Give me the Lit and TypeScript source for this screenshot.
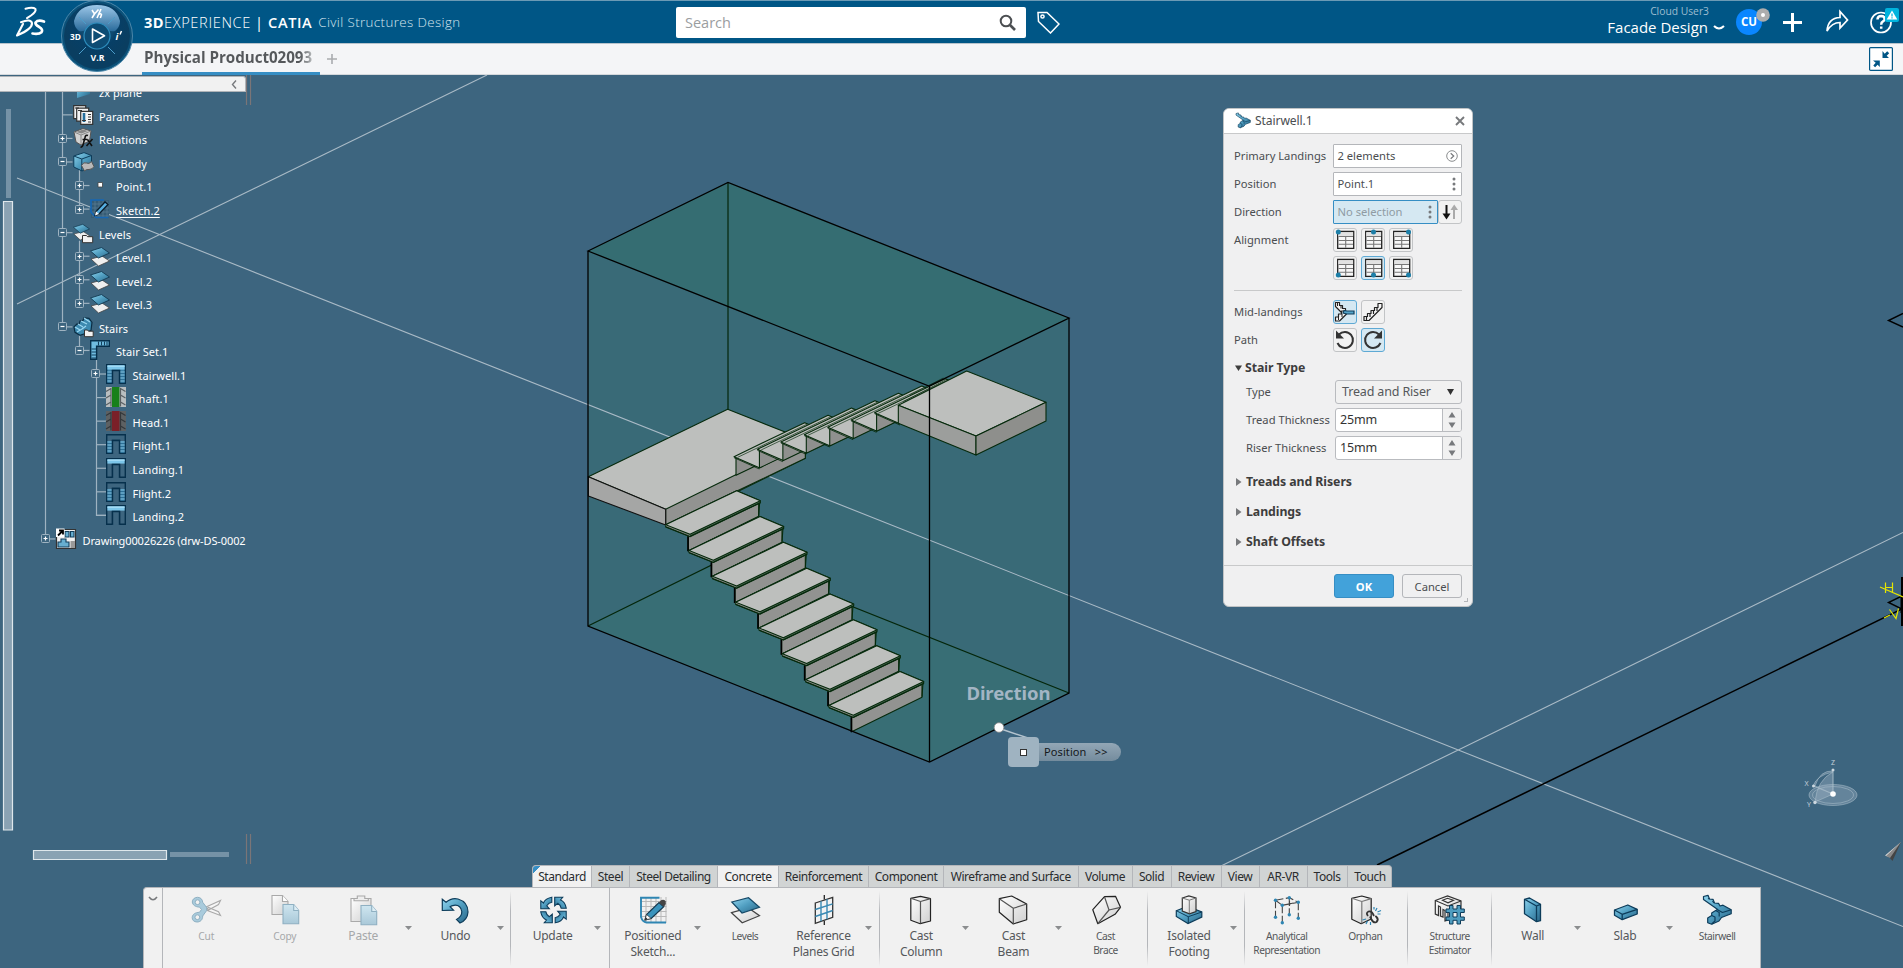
import { LitElement, html, svg, css, nothing } from "lit";
import { customElement, property } from "lit/decorators.js";
import { classMap } from "lit/directives/class-map.js";

const G = svg`<defs>
  <linearGradient id="b" x1="0" y1="0" x2="1" y2="1"><stop offset="0" stop-color="#8fd4ee"/><stop offset=".5" stop-color="#4f9dc0"/><stop offset="1" stop-color="#2b6788"/></linearGradient>
  <linearGradient id="w" x1="0" y1="0" x2="1" y2="1"><stop offset="0" stop-color="#ffffff"/><stop offset="1" stop-color="#cfcfcf"/></linearGradient>
  <linearGradient id="p" x1="0" y1="0" x2="0" y2="1"><stop offset="0" stop-color="#cfe6f0"/><stop offset="1" stop-color="#a9c8d8"/></linearGradient>
</defs>`;

/* Toolbar glyphs, drawn on a 32 x 30 grid */
const ICONS: Record<string, unknown> = {
  cut: svg`<g fill="none" stroke="#a9a9a9" stroke-width="1.1"><path fill="#f6f6f6" d="M15.5 12 30 5.500 28 9.500 18 15zM15.500 15 30 20.500 28 16.800 18 12.500z"/></g><g fill="#a9cbdc" stroke="#8fb0c2" stroke-width="1"><path fill-rule="evenodd" d="M7 2.300c3 0 5 2 5.200 5l4 5.200v3l-4 5.500c0 4-2.500 6-5.700 6-3 0-5-2-4.800-4.600C2 19 5 17.500 9 17.300l2-2.800-2-2.400C5 12 2 10 1.800 7 1.700 4.500 4 2.300 7 2.300zM7 4.800a2.400 2.400 0 1 0 .1 4.800A2.400 2.400 0 0 0 7 4.800zM6.800 19.800a2.400 2.400 0 1 0 .1 4.800 2.400 2.400 0 0 0-.1-4.800z"/></g>`,
  copy: svg`<g stroke-width="1.100"><path d="M2.500.5h10.500l5.500 6v13H2.500z" fill="url(#w)" stroke="#a9a9a9"/><path d="M13 .5v6h5.500" fill="#fff" stroke="#a9a9a9"/><path d="M13.500 9.500h10.700l5 6v13.300H13.500z" fill="url(#p)" stroke="#8fb0c2"/><path d="M24.200 9.500v6h5" fill="#ddeef5" stroke="#8fb0c2"/></g>`,
  paste: svg`<g stroke-width="1.100"><path d="M3.500 3.500h20v23h-20z" fill="url(#w)" stroke="#a9a9a9"/><path d="M6.500 5.800V3.500h3.300V1h7.500v2.500h3.500v2.300z" fill="#eee" stroke="#a9a9a9"/><path d="M13.500 10.500h10.700l5 6v13.300H13.500z" fill="url(#p)" stroke="#8fb0c2"/><path d="M24.200 10.500v6h5" fill="#ddeef5" stroke="#8fb0c2"/></g>`,
  undo: svg`<path d="M2.800 4.200 6.500 7.300Q12 2.500 18.500 4 28.500 7 28.500 17 28 25 20.500 28L17 24.500Q22.500 21.500 22.300 16.500 21 9.500 14.500 10.300 11.800 10.600 10.600 11.700L14 15.200 2.800 15.500z" fill="url(#b)" stroke="#0d3c5a" stroke-width="1.200"/>`,
  update: svg`<g fill="url(#b)" stroke="#0d3c5a" stroke-width="1.100">${[0, 90, 180, 270].map(a => svg`<path transform="rotate(${a} 16 15)" d="M14.300 2.200Q7.500 3.500 6 8L3.300 5.800v8h8.500L9.300 10.800Q11 7.800 14.300 7.300z"/>`)}</g>`,
  sketch: svg`<path d="M3 6.500h26M3 11.500h26M3 16.500h26M3 21.500h26M8.500 2v26M13.500 2v26M18.500 2v26M23.500 2v26M28.500 2v26" stroke="#b9b9b9" fill="none"/><path d="M22 2.700H3.500V22q1.500 5 5.500 5.500h19.500" fill="none" stroke="#2f86b3" stroke-width="1.900"/><path d="M7.500 25 9 19.500 21.500 7.500l4.700 4.300L13.700 23.500z" fill="#3b94bd" stroke="#17394f" stroke-width="1.200"/><path d="M7.500 25 9 19.500l4.700 4z" fill="#fff" stroke="#333" stroke-width=".7"/><path d="m21.500 7.500 2-2.300q3-1.200 4.500 1 .8 2-.2 3.800l-1.600 1.800z" fill="#444"/><path d="m7.500 25 .7-2.700 1.800 1.700z" fill="#222"/>`,
  levels: svg`<path d="M2 17.700 19 13l11 7.700L12.700 27.700z" fill="url(#w)" stroke="#444" stroke-width="1.200"/><path d="M2.300 7 19 2.700l11 9.600L12.500 18z" fill="url(#b)" stroke="#174a68" stroke-width="1.200"/>`,
  grid: svg`<path d="M6.800 8 24.200 2.300v20L6.800 28.300z" fill="#f3f3f3" stroke="#333" stroke-width="1.300"/><path d="M6.800 14.500 24.200 8.800M6.800 21.500l17.400-6M12.500 6.300v20M18.500 4.300v20" stroke="#3a8ab4" stroke-width="1.400"/><path d="M15.800 0v4.500M15.800 26v4" stroke="#222" stroke-width="1.300"/>`,
  column: svg`<g stroke="#222" stroke-width="1.200" stroke-linejoin="round"><path d="m5.300 3.300 9.700-2 10 2.400V26l-10.300 2.700-9.400-3.400z" fill="url(#w)"/><path d="m5.300 3.300 9.700 3.200 10-2.800M15 6.500v22" fill="none" stroke="#555"/></g>`,
  beam: svg`<g stroke="#222" stroke-width="1.200" stroke-linejoin="round"><path d="M1.800 3.700 14.200 1l15 8v15.700L15.800 29l-14-11.700z" fill="url(#w)"/><path d="m1.800 3.700 14 9.600 13.400-4.300M15.800 13.300V29" fill="none" stroke="#555"/></g>`,
  brace: svg`<g stroke="#222" stroke-width="1.200" stroke-linejoin="round"><path d="m2.300 14.700 11.700-13 11-.4 5 11-5.500 7-17.200 9.400z" fill="url(#w)"/><path d="m14 1.700 4.500 13.300 11.500-2.700M18.500 15 7.300 28.700" fill="none" stroke="#555"/></g>`,
  footing: svg`<path d="m2.800 15.700 11-4.200 14.500 5.500v5L14.500 28.500 2.800 21.500z" fill="url(#b)" stroke="#0d3c5a" stroke-width="1.200"/><path d="m2.800 15.700 12 6 13.500-4.700M14.800 21.700v6.600" fill="none" stroke="#0d3c5a"/><path d="m8.800 3 6.500-2 7.200 2v13.500l-6.500 2.300L8.800 16z" fill="url(#w)" stroke="#333" stroke-width="1.200"/><path d="m8.800 3 7 2.200 6.700-2.200M15.800 5.200v13" fill="none" stroke="#777"/>`,
  analytical: svg`<path d="M4 5.300v17M17.800 2.700v17M26.800 7.300v16M10.800 10.300v17.400M4 5.300l13.800-2.600 9 4.600-16 3zM18 6v5M15 9.500l7-1.500" stroke="#444" stroke-width="1.100" fill="none" stroke-dasharray="8 2.500"/>${[[4, 5.3], [17.8, 2.7], [26.800, 7.300], [10.800, 10.300], [4, 22.300], [10.800, 27.700], [17.800, 19.700], [26.800, 23.300]].map(p => svg`<circle cx=${p[0]} cy=${p[1]} r="1.700" fill="#2f86b3"/>`)}`,
  orphan: svg`<g stroke="#222" stroke-width="1.200" stroke-linejoin="round"><path d="m2.300 3.300 10-2.300 9.400 2.700V24l-10 4.700-9.400-4.400z" fill="url(#w)"/><path d="m2.300 3.300 10 3.200 9.400-2.800M12.300 6.500v22" fill="none" stroke="#777"/></g><path d="M19 19.500q-2.500-3 .5-4.500 3-.8 4.500 2.500l1 2M21 20l1.500 3q2 4 5 2.500 2.500-2.500 0-5l-1.200-1" transform="translate(-.5 1.500)" fill="none" stroke="#333" stroke-width="1.800"/><path d="m26 16 1.500-3M28 17l3.500-1.500M28 19h3M18 26l-1.500 3M16.500 24l-3.500 1M21 27v3M24.500 14.500v-2.500" stroke="#2f86b3" stroke-width="1.200"/>`,
  structure: svg`<path d="M.8 5.500 13 1l13.500 5v11H13.500v8l-3 1V15.500l-2-1V22L6 21v-9l-2-1v9.500L.8 19z" fill="url(#w)" stroke="#333" stroke-width="1.200"/><path d="M.8 5.500 13.500 11l13-5M8 5.300l5-2 6 2-5.500 2.500z" fill="none" stroke="#333" stroke-width="1.100"/><path d="M15 10.500h3.500V14h4v-3.500H26V14h3.800v3.500H26v4.500h3.800v3.300H26V29h-3.500v-3.700h-4V29H15v-3.700h-3.500V22H15v-4.500h-3.500V14H15zM18.500 17.500V22h4v-4.500z" fill="#4f9dc0" stroke="#0d3c5a" fill-rule="evenodd"/>`,
  wall: svg`<g stroke="#0d3c5a" stroke-width="1.300" stroke-linejoin="round"><path d="m7 4.300 5-1.300 11 6.300v16.400l-4 1-12-8z" fill="url(#b)"/><path d="m7 4.300 12 6.700 4-1.700M19 11v15.700" fill="none"/></g>`,
  slab: svg`<g stroke="#0d3c5a" stroke-width="1.300" stroke-linejoin="round"><path d="m5 15 13.300-5 9.400 4.300V19l-15 5.700L5 20.300z" fill="url(#b)"/><path d="m5 15 7.700 4.300 15-5M12.700 19.300v5.400" fill="none"/></g>`,
  stairwell: svg`<g stroke="#0d3c5a" stroke-width="1.200" stroke-linejoin="round"><path d="M2 1.500 6.500.3 8 4l3.500.3L13 8l4 .3L18.500 11l3-.8 8.200 4.500v4L20 22.500 17.500 26l-7.300 3.200-4-1.500V23l4-2.500V18l4-2.500 2-1L2 4.500z" fill="url(#b)"/><path d="m16 14.700 5 2.800 8.700-2.800M10.200 20.500l3.300 1.500v4l-3.300 3M14.200 15.500l3.500 2v4M6.500 3.500 8 4M11 6l1.500 2" fill="none"/></g>`,
};

@customElement("tool-icon")
class ToolIcon extends LitElement {
  @property() name = "";
  static styles = css`:host { display: block; width: 32px; height: 30px; } svg { display: block; overflow: visible; }`;
  render() { return html`<svg width="32" height="30" viewBox="-.500 0 32 30">${G}${ICONS[this.name]}</svg>`; }
}

/* Tree glyphs, 20 x 20 */
const well = (top: boolean, sides: boolean) => svg`<path d="M.7.7h18.600v18.600h-5.800V6.500H6.500v12.800H.7z" fill="${top && sides ? "#3b82a8" : "none"}" stroke="#06304c" stroke-width="1.400"/>
  ${top ? svg`<path d="M1.400 1.400h17.200v4.200H1.400z" fill="#7cc6ea"/><path d="M1.400 1.400h17.200v1.500H1.400z" fill="#a5ddf6"/>` : nothing}
  ${sides ? svg`<path d="M1.400 7h4.400v12H1.400zM14.200 7h4.400v12h-4.400z" fill="#2d7096"/><path d="M1.400 8h4.400M14.200 8h4.400M1.400 11h4.400M14.200 11h4.400M1.400 14h4.400M14.200 14h4.400M1.400 17h4.400M14.200 17h4.400" stroke="#8fd0ee" stroke-width="1.200"/>` : nothing}
  <path d="M6.500 19.500v-13h7v13" fill="#3d657f" stroke="#06304c" stroke-width="1.400"/>`;
const sheet = svg`<path d="m1 13 11-3 7.500 5-11 5z" fill="#efefef" stroke="#444" stroke-width=".8"/><path d="m.5 5 11-3.500 8 5.500L8.500 12z" fill="url(#b)" stroke="#123a52" stroke-width=".9"/>`;
const shaft = (c: string, side: string, ln: string) => svg`<path d="M0 0h20v20H0z" fill="${side}"/><path d="M6 0h7.500v20H6z" fill="${c}"/><path d="M0 4.500l5-3v18M0 11l5-3M0 18l5-3M19.500 4.500l-5-3v18M19.500 11l-5-3M19.500 18l-5-3" stroke="${ln}" stroke-width="1.200" fill="none"/>`;
const TREE_ICONS: Record<string, unknown> = {
  plane: svg`<path d="M4 4 17 0v13L4 17z" fill="url(#b)"/>`,
  params: svg`${[0, 3, 7].map(o => svg`<path d="M${.7 + o} ${.7 + o * .8}h12v13h-12z" fill="#f4f4f4" stroke="#333" stroke-width="1.200"/>`)}<path d="M11 8v9" stroke="#256f9e" stroke-width="2.600"/><path d="M9 15.500h4M15 9.500h3M15 12h3M15 14.500h3M15 17h3M2 3h4M5 5.500h4" stroke="#333"/>`,
  relations: svg`<path d="m1 4 9-3.500L18 3l-1.500 10L8 17l-5-3z" fill="#d2d2d2" stroke="#555"/><path d="m1 4 7 3 10-4M8 7v9" stroke="#888" fill="none"/><path d="m3 4 7-2.500 5 1.500-6.500 2.600z" fill="#888"/><path d="M15 7.500q-2.500-1-3 2L10 17q-.7 2.500-2.500 2M9.500 11.500h5M14.500 11.500l4.500 6.500M19.500 11l-6 7" stroke="#111" stroke-width="1.600" fill="none"/>`,
  body: svg`<path d="M.8 4 11 .6l7.500 2.900v11L9 19 .8 15z" fill="url(#b)" stroke="#0d3c5a"/><path d="m.8 4 8 3 9.700-3.500M8.800 7v12" fill="none" stroke="#0d3c5a"/><path d="M8.500 13.500q2-4 5-2.500 2.500 1.500 5-1.500l2.500 5q-1.500 3-5 3-3-.5-4.500 1.500z" fill="#b9b9b9" stroke="#555"/>`,
  point: svg`<path d="M8 7.500h4.500v4.500H8z" fill="#fff" stroke="#444" stroke-width=".8"/>`,
  sketch: svg`<path d="M1 1h18v18H1z" fill="#365c75"/><path d="M5 2v17M9 2v17M13 2v17M17 2v17M2 5h17M2 9h17M2 13h17M2 17h17" stroke="#5c7f95" stroke-width=".7"/><path d="M14 1H1v12l5 5.500h12.500" fill="none" stroke="#1667b5" stroke-width="1.700"/><path d="m5 16.500 1-4L15 3l3 2.500-9 9.500z" fill="#56aee0" stroke="#0b1d2b" stroke-width="1.300"/><path d="m5 16.500 1-4 3 2.500z" fill="#fff"/>`,
  level: sheet,
  levels: svg`<g transform="scale(.85)">${sheet}</g><path d="M9.500 12.500h4l1 1.200h5.200v6H9.500z" fill="#f2f2f2" stroke="#333"/>`,
  stairs: svg`<path d="M1 10 4 7l2 .5L7 4l3-.5L11 .8l5 .5 3 4-1 8-5 3-6 2-5-3z" fill="#3d8ab0" stroke="#0b2e45" stroke-width="1.200"/><path d="m2 10 5 3M5 7l5 3M8 4l6 3M11 1l6 4M4 15l5-3M9 12l4-3" stroke="#9cd8f2" stroke-width="1.200"/><path d="M11.500 13h3l1 1.200h4.700v5.500h-8.700z" fill="#f2f2f2" stroke="#333"/>`,
  set: svg`<path d="M.7.7h18.600v5.600H6.600v13H.7z" fill="#6fbce0" stroke="#06304c" stroke-width="1.400"/><path d="M8.500 1.500v4M11.500 1.500v4M14.500 1.500v4M17 1.500v4M1.500 9h4.500M1.500 12h4.500M1.500 15h4.500M1.500 18h4.500" stroke="#123f5c" stroke-width="1.100"/>`,
  well: well(true, true), flight: well(false, true), landing: well(true, false),
  shaft: shaft("#17801a", "#b9bec0", "#5a6063"),
  head: shaft("#7a2028", "#5d6163", "#33373a"),
  drawing: svg`<path d="M.5.5h19v19H.5z" fill="#f0f0f0" stroke="#333" stroke-width="1.200"/><path d="M9 2.500h4v5.500H9zM14.500 2.500h3.500v5.500h-3.500zM2 18v-5h3v-3h5v3h3v5z" fill="#67aed0" stroke="#123f5c" stroke-width="1.100"/><path d="M14.500 12h4.500v7h-4.500z" fill="#999"/><path d="M0-.5h8.500V8H0z" fill="#fff"/><path d="M2 6.500 6 2.500M3 1.500h4v4" stroke="#000" stroke-width="1.800" fill="none"/>`,
};

type Node = [label: string, icon: string, level: number, toggle: string];
const NODES: Node[] = [
  ["zx plane", "plane", 1, ""], ["Parameters", "params", 1, ""], ["Relations", "relations", 1, "+"], ["PartBody", "body", 1, "-"],
  ["Point.1", "point", 2, "+"], ["Sketch.2", "sketch", 2, "+"], ["Levels", "levels", 1, "-"],
  ["Level.1", "level", 2, "+"], ["Level.2", "level", 2, "+"], ["Level.3", "level", 2, "+"],
  ["Stairs", "stairs", 1, "-"], ["Stair Set.1", "set", 2, "-"], ["Stairwell.1", "well", 3, "+"],
  ["Shaft.1", "shaft", 3, ""], ["Head.1", "head", 3, ""], ["Flight.1", "flight", 3, ""], ["Landing.1", "landing", 3, ""],
  ["Flight.2", "flight", 3, ""], ["Landing.2", "landing", 3, ""], ["Drawing00026226 (drw-DS-0002", "drawing", 0, "+"],
];

@customElement("product-tree")
class ProductTree extends LitElement {
  static styles = css`
    :host { display: block; position: relative; width: 246px; height: 480px; overflow: hidden; color: #fff;
      font: 11px "Noto Sans", sans-serif; letter-spacing: 0.05px; }
    .guides { position: absolute; left: 0; top: 0; }
    .rows { position: relative; margin-top: -12.500px; }
    .row { display: flex; align-items: center; height: 23.560px; white-space: nowrap; }
    .t { width: 9px; height: 9px; flex: none; }
    .t svg, .ic svg { display: block; overflow: visible; }
    .ic { width: 20px; height: 20px; margin: 0 6.500px 0 6px; flex: none; }
    .u { text-decoration: underline; text-underline-offset: 2px; }
    .l0 { padding-left: 41px; letter-spacing: -.12px; } .l1 { padding-left: 57.500px; } .l2 { padding-left: 74.500px; } .l3 { padding-left: 91px; }
    .lab { padding-top: 3px; }
  `;
  render() {
    const y = (i: number) => i * 23.56 - .7;
    return html`<svg class="guides" width="246" height="480" stroke="#9fb3c1" stroke-width="1.200" fill="none">
        <path d="M45.500 0V${y(19)}M62.500 0V${y(10)}M79.500 ${y(3) + 8}V${y(5)}M79.500 ${y(6) + 8}V${y(9)}M79.500 ${y(10) + 8}V${y(11)}M96.500 ${y(11) + 8}V${y(18)}H106"/>
        ${NODES.map((n, i) => { const x = [45.5, 62.5, 79.5, 96.5][n[2]]; return svg`<path d="M${x} ${y(i)}h10"/>`; })}
      </svg>
      <div class="rows">${NODES.map(n => html`<div class="row l${n[2]}">
        <span class="t">${n[3] ? html`<svg width="9" height="9"><rect x=".5" y=".5" width="8" height="8" rx="1" fill="#3d657f" stroke="#9fb3c1"/><path d="M2.500 4.500h4${n[3] === "+" ? "M4.500 2.500v4" : ""}" stroke="#fff" stroke-width="1.200"/></svg>` : nothing}</span>
        <span class="ic"><svg width="20" height="20">${G}${TREE_ICONS[n[1]]}</svg></span>
        <span class=${classMap({ lab: true, u: n[0] === "Sketch.2" })}>${n[0]}</span></div>`)}</div>`;
  }
}

@customElement("model-scene")
class ModelScene extends LitElement {
  static styles = css`:host { display: block; position: absolute; inset: 0; } svg { display: block; }
    .dir { font: bold 18.500px "Noto Sans", sans-serif; fill: #a3b5c4; letter-spacing: -.1px; } .ax { font: 7px "Noto Sans", sans-serif; fill: #c3d0da; }`;
  render() {
    const lower = [0, 1, 2, 3, 4, 5, 6, 7].map(k => svg`<g transform="translate(${k * 70} ${k * 77.5})">
      <path d="M355 557 569 456 566 499 355 603z" fill="#929391"/>
      <path d="M287 524 500 422 571 452 571 458 360 559 287 530z" fill="#4f6b56"/>
      <path d="M287 524 500 422 571 452 360 553z" fill="#bdbfbd"/>
      <path d="M287 527 360 557" stroke="#9a8f95" stroke-width="2"/><path d="M354 559V604" stroke="#000" stroke-width="5"/>
      <path d="M287 531 360 560 571 458M566 458V498" /></g>`);
    const upper = [0, 1, 2, 3, 4, 5, 6].map(k => svg`<g transform="translate(${k * 70.3} ${k * -22})">
      <path d="M498 325V376L710 274V222z" fill="#8f908e"/>
      <path d="M492 320 704 218 780 250 568 353z" fill="#bdbfbd"/><path d="M492 323 568 357" stroke-width="2.500"/>
      <path d="M503 322 712 222" stroke-width="2"/></g>`);
    return html`<svg width="1903" height="893" viewBox="0 75 1903 893">
      <path d="M588 251 728 182 1069 318V693L929 762 588 626z" fill="#396a77"/>
      <path d="M588 251 728 182 1069 318 929 386z" fill="#356d72"/>
      <path d="M588 626 728 557 1069 693 929 762z" fill="#386e75"/>
      <g stroke="#a9bac6" stroke-width="1.100" fill="none"><path d="M17 178 1903 926.500M17 304 487 75M1222 865.500 1903 532.500"/></g>
      <path d="M1377 865 1903 608.500" stroke="#000" stroke-width="1.500"/>
      <g stroke="#04260a" stroke-width="1.200" fill="none"><path d="M728 182V557M588 626 728 557 1069 693"/></g>
      <g transform="translate(570 350) scale(.33333)" stroke="#062a0c" stroke-width="3.300" stroke-linejoin="round" fill="none">
        <path d="M55 380 473 178 706 270 706 325 505 424 290 525 287 478z" fill="#bdbfbd"/>
        <path d="M287 478 706 272V325L287 525z" fill="#929391"/>
        <path d="M55 380 287 478V525L55 438z" fill="#a5a6a5" stroke="#111"/>
        ${upper}${lower}
        <path d="M985 166 1190 63 1428 157 1218 258z" fill="#bdbfbd"/>
        <path d="M985 166 1218 258V315L985 220z" fill="#9c9e9c"/>
        <path d="M1218 258 1428 157V213L1218 315z" fill="#8e8f8c"/>
        <path d="M1000 155 1130 88M1020 135 1120 84" stroke-width="2"/>
      </g>
      <g stroke="#000" stroke-width="1.300" fill="none"><path d="M588 251 728 182.500 1069 318 929 386zM588 251V626L929.500 762 1069 693V318M929.500 386V762"/></g>
      <path d="M1001 729 1037 741" stroke="#b5c4cf" stroke-width="1.500"/><circle cx="999" cy="727.500" r="4.800" fill="#fdfdfd" stroke="#8a8a8a" stroke-width=".8"/>
      <text class="dir" x="966.500" y="699.500">Direction</text>
      <g fill="none" stroke="#000" stroke-width="1.400"><path d="M1903 313.500 1888.500 320.500 1903 327M1903 595.500 1888.500 602.500 1903 609.500"/><path d="M1902 577V626" stroke-width="2"/><path d="M1902 595V613" stroke-width="3"/></g>
      <g fill="none" stroke="#e6e600" stroke-width="1.200"><path d="M1880 587 1903 597M1885.500 582.500V593M1892.500 582.500V593M1885.500 587.500h7M1889.500 609.500 1896 618.500 1898.500 608.500M1884 618l6-3"/></g>
      <g fill="#9fb5c6" fill-opacity=".4" stroke="#a9bdcb" stroke-opacity=".55"><ellipse cx="1833" cy="795" rx="24" ry="10.500"/><ellipse cx="1833" cy="795" rx="20.500" ry="8.500" fill="none"/><path d="M1833 794V771Q1820 770 1815 786zM1833 794 1813 786Q1817 775 1833 772M1833 794l-18 8q2-22 18-30z"/></g>
      <g fill="#cdd8e0"><circle cx="1833" cy="770" r="1.500"/><circle cx="1813.500" cy="786" r="1.500"/><circle cx="1815" cy="802.500" r="1.700"/><circle cx="1833" cy="794" r="2.800" fill="#fff"/></g>
      <text class="ax" x="1831" y="765">Z</text><text class="ax" x="1804.500" y="786">X</text><text class="ax" x="1807" y="807">Y</text>
      <path d="M1901 842 1885 855.500 1889 857z" fill="#ddd"/><path d="M1901 842 1889 857 1892.500 861z" fill="#444"/><path d="M1901 842 1886 856 1890 858z" fill="#888"/>
    </svg>`;
  }
}

const align = (x: number, y: number) => html`<svg width="22" height="22" viewBox="0 0 22 22"><path d="M3.700 2.500H19.700V19.300H3.700z" fill="#f7f7f7" stroke="#222" stroke-width="1.300"/><path d="M4.300 3.200h14.800v4H4.300z" fill="#e2e2e2"/><path d="M4.500 7.500h14.500M4.500 11.500h14.500M4.500 15.300h14.500M11.700 7.500V18.700" stroke="#777" stroke-width="1.100"/><circle cx=${x} cy=${y} r="2.500" fill="#1d7fa8"/></svg>`;
const flightSm = (d: string) => svg`<path d=${d} fill="#f6f6f6" stroke="#222" stroke-width="1.200" stroke-linejoin="round"/>`;

@customElement("stairwell-dialog")
class StairwellDialog extends LitElement {
  static styles = css`
    :host { display: flex; flex-direction: column; box-sizing: border-box; width: 250px; height: 499px; background: #f0f0f1; border: 1px solid #c0c3c5;
      border-radius: 6px; overflow: hidden; color: #4a4d50; font: 11.200px "Noto Sans", sans-serif; }
    * { box-sizing: border-box; }
    svg { display: block; flex: none; }
    header { display: flex; align-items: center; height: 25px; background: #fff; border-bottom: 1px solid #c8c9ca; padding: 0 7px 1px 11px; font-size: 12.100px; letter-spacing: -.1px; }
    header span { flex: 1; padding: 0 0 1px 4px; }
    .body { padding: 10px 10px 0; flex: 1; }
    .row { display: flex; height: 24px; margin-bottom: 4px; align-items: center; }
    .lab { width: 99px; flex: none; white-space: nowrap; padding-bottom: 1.500px; }
    .field { flex: 1; height: 24px; display: flex; align-items: center; justify-content: space-between; background: #fff; border: 1px solid #b4b6ba; border-radius: 1px; padding: 0 3px 1px 3.500px; }
    .field.sel { background: #d5e8f2; border: 1px solid #368ec4; color: #8f9ba3; }
    .btn { width: 24px; height: 24px; border: 1px solid #c2c4c6; border-radius: 3px; background: #f2f2f2; margin-right: 4px; display: flex; align-items: center; justify-content: center; }
    .btn.on { background: #d5e8f2; border-color: #5ea9d4; }
    .btn.last { margin: 0 0 0 0; }
    hr { border: 0; border-top: 1px solid #c8c9ca; margin: 10px 0 9px; }
    .sec { display: flex; align-items: center; font-weight: bold; font-size: 12.300px; color: #3d3d3d; height: 30px; letter-spacing: -.05px; }
    .sec svg { margin: 0 4px 0 2px; }
    .sec.open { height: 24px; padding-bottom: 1px; }
    .sec.open svg { margin: 0 3px 0 1px; }
    .sub .lab { width: 89px; } .sub { padding-left: 12px; }
    .sub .field { border-radius: 3px; font-size: 12.500px; color: #333; padding: 0 0 0 4px; border-color: #b9bbbf; letter-spacing: -.15px; }
    .sub .field span { padding-bottom: 2px; }
    .sub .combo { background: #f1f1f1; padding: 0 7px 0 6px; color: #55585b; }
    .spin { width: 19px; height: 22px; border-left: 1px solid #b9bbbf; background: #f1f1f1; display: flex; align-items: center; justify-content: center; border-radius: 0 2px 2px 0; }
    .gap { height: 2.500px; }
    footer { position: relative; border-top: 1px solid #c8c9ca; height: 41px; padding: 8px 10px 0; display: flex; justify-content: flex-end; gap: 8px; }
    .b { width: 60px; height: 24px; border: 1px solid #b4b6ba; border-radius: 3px; text-align: center; line-height: 23px; }
    .ok { background: #42a2da; border-color: #368ec4; color: #fff; font-weight: bold; }
    .grip { position: absolute; right: 4px; bottom: 4px; width: 4px; height: 4px; border-right: 1px solid #b4b6ba; border-bottom: 1px solid #b4b6ba; }
  `;
  render() {
    const dots = html`<svg width="7" height="14"><g fill="#77797c"><circle cx="3" cy="2" r="1.500"/><circle cx="3" cy="7" r="1.500"/><circle cx="3" cy="12" r="1.500"/></g></svg>`;
    const spin = html`<div class="spin"><svg width="8" height="16"><path d="M.5 5.500 4 0 7.500 5.500zM.5 10.500h7L4 16z" fill="#77797c"/></svg></div>`;
    const tri = html`<svg width="6" height="8"><path d="M0 0 5.500 4 0 8z" fill="#77797c"/></svg>`;
    return html`
      <header><svg width="16" height="17" viewBox="0 0 31 30">${G}${ICONS.stairwell}</svg><span>Stairwell.1</span>
        <svg width="10" height="10"><path d="M1 1 9 9M9 1 1 9" stroke="#77797c" stroke-width="1.900"/></svg></header>
      <div class="body">
        <div class="row"><div class="lab">Primary Landings</div><div class="field">2 elements<svg width="12" height="12"><circle cx="6" cy="6" r="5.300" fill="none" stroke="#8b8d8f"/><path d="m4.700 3.300 3 2.700-3 2.700" fill="none" stroke="#77797c" stroke-width="1.200"/></svg></div></div>
        <div class="row"><div class="lab">Position</div><div class="field">Point.1 ${dots}</div></div>
        <div class="row"><div class="lab">Direction</div><div class="field sel">No selection ${dots}</div><div class="btn last"><svg width="18" height="16"><path d="M5.500 1v10" stroke="#111" stroke-width="2"/><path d="M1.500 9.500h8l-4 6z" fill="#111"/><path d="M13 5v10" stroke="#aaa" stroke-width="2"/><path d="M9.500 6h7.500L13.200.5z" fill="#aaa"/></svg></div></div>
        <div class="row"><div class="lab">Alignment</div><div class="btn">${align(4.3, 3)}</div><div class="btn">${align(11.5, 3)}</div><div class="btn">${align(18.5, 3)}</div></div>
        <div class="row"><div class="lab"></div><div class="btn">${align(4.3, 18)}</div><div class="btn on">${align(11.5, 18)}</div><div class="btn">${align(18.5, 18)}</div></div>
        <hr>
        <div class="row"><div class="lab">Mid-landings</div>
          <div class="btn on"><svg width="22" height="22">${flightSm("M1.500 1.500h4v3h3v3h3v3l-3 2-4-4-3-3z")}${flightSm("M1.500 20v-4h3v-3h3v-3h4l1 3-4 4-3 3z")}<path d="M3.500 2v3M7 4.500v3M4.500 16v3M8 13v3" stroke="#222"/><path d="m10 9.500 3 .5h7v3h-7l-4-1z" fill="#55a5ca" stroke="#123f5c" stroke-width="1.200"/></svg></div>
          <div class="btn"><svg width="22" height="22">${flightSm("M2 19.500v-4h3.500v-3h3.500v-3h3.500v-3H16v-4h4v4L7 19.500z")}<path d="M4.500 16v3.500M8 13v3M11.500 10v3M15 7v3" stroke="#222" stroke-width="1.200"/></svg></div></div>
        <div class="row"><div class="lab">Path</div>
          <div class="btn"><svg width="22" height="22"><path d="M5 5.500A8 8 0 1 1 3.500 14" fill="none" stroke="#333" stroke-width="2"/><path d="M2 1.500v8h8z" fill="#333"/></svg></div>
          <div class="btn on"><svg width="22" height="22"><path d="M17 5.500A8 8 0 1 0 18.500 14" fill="none" stroke="#333" stroke-width="2"/><path d="M20 1.500v8h-8z" fill="#333"/></svg></div></div>
        <div class="sec open"><svg width="7" height="6"><path d="M0 .5h7L3.500 6z" fill="#3d3d3d"/></svg>Stair Type</div>
        <div class="sub">
          <div class="row"><div class="lab">Type</div><div class="field combo"><span>Tread and Riser</span><svg width="7" height="6"><path d="M0 0h7L3.500 6z" fill="#333"/></svg></div></div>
          <div class="row"><div class="lab">Tread Thickness</div><div class="field"><span>25mm</span>${spin}</div></div>
          <div class="row"><div class="lab">Riser Thickness</div><div class="field"><span>15mm</span>${spin}</div></div>
        </div>
        <div class="gap"></div>
        ${["Treads and Risers", "Landings", "Shaft Offsets"].map(s => html`<div class="sec">${tri}${s}</div>`)}
      </div>
      <footer><div class="b ok">OK</div><div class="b">Cancel</div><div class="grip"></div></footer>`;
  }
}

type Tool = { i?: string; t?: string[]; small?: boolean; dis?: boolean; arrow?: boolean; sep?: number; full?: boolean };
const TOOLS: Tool[] = [
  { i: "cut", t: ["Cut"], small: true, dis: true }, { i: "copy", t: ["Copy"], dis: true, small: true }, { i: "paste", t: ["Paste"], dis: true, arrow: true },
  { i: "undo", t: ["Undo"], arrow: true }, { sep: 5 }, { i: "update", t: ["Update"], arrow: true }, { sep: 8, full: true },
  { i: "sketch", t: ["Positioned", "Sketch..."], arrow: true }, { i: "levels", t: ["Levels"], small: true }, { i: "grid", t: ["Reference", "Planes Grid"], arrow: true }, { sep: 5.5 },
  { i: "column", t: ["Cast", "Column"], arrow: true }, { i: "beam", t: ["Cast", "Beam"], arrow: true }, { i: "brace", t: ["Cast", "Brace"], small: true }, { sep: 5 },
  { i: "footing", t: ["Isolated", "Footing"], arrow: true }, { sep: 5.5 }, { i: "analytical", t: ["Analytical", "Representation"], small: true }, { i: "orphan", t: ["Orphan"], small: true }, { sep: 6 },
  { i: "structure", t: ["Structure", "Estimator"], small: true }, { sep: 4.5 }, { i: "wall", t: ["Wall"], arrow: true }, { i: "slab", t: ["Slab"], arrow: true }, { i: "stairwell", t: ["Stairwell"], small: true },
];
const TABS: [string, number][] = [["Standard", 59], ["Steel", 38], ["Steel Detailing", 88], ["Concrete", 61], ["Reinforcement", 90], ["Component", 75], ["Wireframe and Surface", 134.5], ["Volume", 54], ["Solid", 39], ["Review", 50], ["View", 38], ["AR-VR", 48], ["Tools", 40], ["Touch", 45]];

@customElement("action-bar")
class ActionBar extends LitElement {
  static styles = css`
    :host { display: block; width: 1618px; font-family: "Noto Sans", sans-serif; color: #55585b; }
    * { box-sizing: border-box; }
    .tabs { display: flex; height: 22px; margin-left: 389px; width: 860px; border: 1px solid #b4b6ba; border-bottom: 0; border-radius: 4px 4px 0 0; overflow: hidden; background: #d1d4d4; }
    .tab { flex: none; border-right: 1px solid #b4b6ba; font-size: 12px; letter-spacing: -.45px; color: #2a2c2e; line-height: 22px; text-align: center; white-space: nowrap; }
    .tab:last-child { border: 0; }
    .tab.on { background: #f1f1f1; }
    .tab.first { background: linear-gradient(135deg, #368ec4 5px, #f1f1f1 5.500px); }
    .bar { display: flex; height: 81px; background: #f1f1f1; border: 1px solid #b4b6ba; border-bottom: 0; border-radius: 4px 0 0 0; }
    .fold { width: 19px; border-right: 1px solid #b4b6ba; display: flex; justify-content: center; padding-top: 8px; margin-right: 4px; }
    .tool { width: 78.500px; flex: none; display: flex; flex-direction: column; align-items: center; padding-top: 7px; text-align: center; font-size: 12px; line-height: 16px; letter-spacing: -.25px; white-space: nowrap; }
    .small { font-size: 10.200px; line-height: 14px; letter-spacing: -.45px; }
    .small .txt { padding-top: 4px; } .txt { padding-top: 3px; }
    .dis { color: #a6a8aa; letter-spacing: -.2px; }
    .arr { width: 13.700px; flex: none; padding-top: 38px; }
    .arr svg { display: block; margin-left: 2px; }
    .sep { flex: none; display: flex; justify-content: center; }
    .sep i { width: 1px; height: 75px; margin-top: 3px; background: linear-gradient(#f1f1f1, #b4b6ba 20px, #b4b6ba 55px, #f1f1f1); }
    .full i { height: 80px; margin: 0; background: #b4b6ba; }
  `;
  render() {
    return html`<div class="tabs">${TABS.map(([t, w], i) => html`<div class=${classMap({ tab: true, on: t === "Concrete", first: i === 0 })} style="width:${w}px">${t}</div>`)}</div>
      <div class="bar"><div class="fold"><svg width="10" height="6"><path d="M1 1 Q5 6.500 9 1" fill="none" stroke="#77797c" stroke-width="1.500"/></svg></div>
      ${TOOLS.map(t => t.sep ? html`<div class=${classMap({ sep: true, full: !!t.full })} style="width:${t.sep}px"><i></i></div>` : html`
        <div class=${classMap({ tool: true, small: !!t.small, dis: !!t.dis })}><tool-icon name=${t.i}></tool-icon><div class="txt">${t.t!.map(l => html`<div>${l}</div>`)}</div></div>
        ${t.arrow ? html`<div class="arr"><svg width="7" height="5"><path d="M0 0h7L3.500 4z" fill="#8b8d8f"/></svg></div>` : nothing}`)}</div>`;
  }
}

@customElement("app-root")
class AppRoot extends LitElement {
  static styles = css`
    :host { display: flex; flex-direction: column; width: 1903px; height: 968px; overflow: hidden; font-family: "Open Sans", "Noto Sans", sans-serif; background: #3d657f; }
    * { box-sizing: border-box; }
    svg { display: block; flex: none; }
    .top { height: 43px; background: #005686; border-top: 1px solid #6b9ab5; display: flex; color: #fff; align-items: center; position: relative; z-index: 2; }
    .logo { padding-left: 14px; width: 144px; }
    .title { width: 532px; font-size: 14.600px; color: #c6dbe8; white-space: nowrap; display: flex; align-items: center; height: 40px; }
    .title b { color: #fff; letter-spacing: .4px; } .title .x { letter-spacing: .65px; font-weight: 300; color: #fff; } .bar { margin: 0 5px 0 4px; color: #fff; }
    .title .civ { font-weight: 300; margin-left: 6px; letter-spacing: .4px; font-size: 13.300px; color: #d5e5ee; }
    .title .cat { font-weight: 600; color: #fff; letter-spacing: .6px; }
    .search { width: 350px; height: 31px; background: #fff; border-radius: 2px; display: flex; align-items: center; justify-content: space-between; padding: 0 10px 0 9px; color: #9a9da0; font-size: 14.500px; }
    .tag { margin-left: 11px; flex: 1; }
    .user { text-align: right; font-size: 15px; line-height: 19px; white-space: nowrap; padding-bottom: 2px; }
    .user small { display: block; font-size: 10.300px; line-height: 13px; padding-right: 16px; color: #9dbdd0; }
    .user div { display: flex; align-items: center; gap: 5px; }
    .acts { width: 168px; margin-left: 10px; }
    .compass { position: absolute; left: 57px; top: -5px; z-index: 3; }
    .compass text, .cu { font: bold 9.500px "Open Sans", sans-serif; fill: #fff; }
    .cu { font-size: 11.500px; }
    .compass .it { font-style: italic; }
    .tabrow { height: 32px; background: #f4f5f7; border-bottom: 1px solid #d4d8dc; border-top: 1px solid #b7c3cc; display: flex; padding-left: 142px; position: relative; z-index: 1; }
    .doc { width: 178px; height: 31px; border-bottom: 3px solid #368ec4; font-weight: bold; font-size: 15.200px; line-height: 27px; padding-left: 2px; white-space: nowrap; overflow: hidden;
      color: transparent; background: linear-gradient(90deg, #55585b 158px, #c5c8ca 172px); background-clip: text; -webkit-background-clip: text; letter-spacing: -.05px; }
    .plus { margin: 10px 0 0 7px; flex: 1; }
    .win { margin: 3px 10px 0 0; }
    .view { position: relative; flex: 1; }
    .side { position: absolute; left: 0; top: 1px; width: 251px; }
    .strip { height: 16px; width: 246px; background: #f1f1f1; border: 1px solid #b0b4b8; border-left: 0; border-radius: 0 3px 0 0; display: flex; align-items: center; justify-content: flex-end; padding-right: 8px; }
    .rails { position: absolute; left: 0; top: 0; }
    .dlg { position: absolute; left: 1223px; top: 33px; }
    .actions { position: absolute; left: 143px; bottom: 0; }
    .tip { position: absolute; left: 1008px; top: 662px; display: flex; align-items: center; height: 30px; color: #14181b; font: 11px "Noto Sans", sans-serif; }
    .sq { width: 31px; height: 30px; border-radius: 4px; background: #9fb3c1; display: grid; place-items: center; }
    .sq i { width: 7px; height: 7px; border: 1.500px solid #333; background: #fff; }
    .pill { width: 82px; height: 18px; border-radius: 0 9px 9px 0; background: linear-gradient(#93a7b6, #748c9d); padding-left: 5px; line-height: 18px; white-space: pre; letter-spacing: .1px; word-spacing: 1.200px; }
  `;
  render() {
    return html`
      <div class="top">
        <div class="logo"><svg width="34" height="34" viewBox="0 0 34 34" fill="none" stroke="#fff" stroke-linecap="round" stroke-linejoin="round"><path d="M11.500 3.700Q19 1.800 21.500 4 22.500 6.500 17 10.500L13 13.200" stroke-width="2"/><path d="M7 17.200Q16.500 13.500 18 18 18.500 24 3 30.500L9 19" stroke-width="2.100"/><path d="M30 16.500Q24 14.500 21.500 17.500 21 19.800 25 21.800 29.500 24.500 27.500 27.200 25 29.500 18.500 28.500" stroke-width="2.700"/></svg></div>
        <div class="title"><b>3D</b><span class="x">EXPERIENCE</span><span class="bar">|</span><span class="cat">CATIA</span><span class="civ">Civil Structures Design</span></div>
        <div class="search"><span>Search</span><svg width="17" height="17" fill="none" stroke="#4c4f52"><circle cx="7" cy="7" r="5.300" stroke-width="2"/><path d="m11 11 5 5" stroke-width="2.600"/></svg></div>
        <div class="tag"><svg width="23" height="23" fill="none" stroke="#fff" stroke-width="1.500"><path d="M1 1.500h9L22 13l-8.500 9L1.500 10.500z"/><circle cx="5.500" cy="5.500" r="1.600"/></svg></div>
        <div class="user"><small>Cloud User3</small><div>Facade Design<svg width="12" height="6"><path d="M1 1q5 5 10 0" fill="none" stroke="#fff" stroke-width="2"/></svg></div></div>
        <svg class="acts" width="168" height="42" viewBox="1735 1 168 42">
          <circle cx="1749" cy="22" r="13" fill="#0a86ff"/><text class="cu" x="1741" y="25.500">CU</text>
          <circle cx="1763" cy="15" r="6.800" fill="#adadad"/><circle cx="1763" cy="15" r="2" fill="#fff"/>
          <path d="M1783 22.500h19M1792.500 13v19" stroke="#fff" stroke-width="3"/>
          <path d="M1827 31q1-13 13-13.500v-6l7.500 8.500-7.500 8v-5.500q-8 0-13 8.500z" fill="none" stroke="#fff" stroke-width="1.700"/>
          <circle cx="1881" cy="22.500" r="10" fill="none" stroke="#fff" stroke-width="1.700"/><path d="M1877.500 19.500q0-3.500 3.700-3.500 3.500.2 3.500 3 0 1.700-2 2.700-1.500.8-1.500 3M1881.200 26.500v2.300" fill="none" stroke="#fff" stroke-width="2.500"/>
          <rect x="1885" y="8" width="14" height="14" rx="2" fill="#00b4de"/><path d="m1892 10.500 5.300 9h-10.600z" fill="#fff"/><path d="M1892 13.500v3M1892 17.300v1.300" stroke="#00b4de" stroke-width="1.200"/>
        </svg>
        <svg class="compass" width="80" height="80" viewBox="57 -4 80 80">
          <defs><radialGradient id="c" cy=".35"><stop offset="0" stop-color="#2b6d94"/><stop offset=".65" stop-color="#073f66"/><stop offset="1" stop-color="#0a3e61"/></radialGradient>
          <linearGradient id="h" x1="0" y1="0" x2="0" y2="1"><stop offset="0" stop-color="#9cc7e8"/><stop offset="1" stop-color="#2a6b9b"/></linearGradient></defs>
          <circle cx="97" cy="36" r="35.500" fill="#0b5179" stroke="#4b87aa"/><circle cx="97" cy="36" r="33" fill="url(#c)"/>
          <path d="M74 21Q78 5 97 5t23 16q0 6-5 10-6 1-7-2-11-9-22 0-2 3-7 2-5-4-5-10z" fill="url(#h)"/>
          <path d="m79 17 7 7M115 17l-7 7M79 54l7-7M115 54l-7-7" stroke="#4b9cc9"/>
          <circle cx="97" cy="36" r="13" fill="#0d4c74" stroke="#2d8dbd" stroke-width="1.200"/>
          <path d="m92.500 29 12 6.800-12 6.700z" fill="none" stroke="#fff" stroke-width="1.600" stroke-linejoin="round"/>
          <text x="70" y="39.500" textLength="11" lengthAdjust="spacingAndGlyphs">3D</text><text x="90.500" y="61" textLength="14" lengthAdjust="spacingAndGlyphs">V.R</text>
          <text x="115.500" y="39.500" class="it">i</text><path d="m120 34.500 1.500-3.500" stroke="#fff" stroke-width="1.500"/>
          <path d="m92 10 2.500 4 4-4.500M94.500 14l-2.500 4M97 18l4-9M98.500 14.500q2.500-1.500 3 .3l-1.200 3.200" stroke="#fff" stroke-width="1.600" fill="none"/>
        </svg>
      </div>
      <div class="tabrow"><div class="doc">Physical Product02093</div><div class="plus"><svg width="10" height="10"><path d="M0 5h10M5 0v10" stroke="#a9acaf" stroke-width="1.600"/></svg></div>
        <div class="win"><svg width="24" height="24"><rect x=".6" y=".6" width="22.800" height="22.800" rx="1" fill="#fff" stroke="#005686" stroke-width="1.200"/><path d="M13.500 4v7h6.500l-2.300-2.200 2.500-2.500-2-2-2.500 2.500zM4 13.500h6.800v6.500l-2.200-2.200-2.500 2.500-1.800-1.900 2.400-2.600z" fill="#005686"/></svg></div></div>
      <div class="view">
        <model-scene></model-scene>
        <svg class="rails" width="260" height="800" viewBox="0 75 260 800"><path d="M246.500 75V105M250.500 75V105M246.500 834V864M250.500 834V864" stroke="#7b7577" stroke-width="1.200"/>
          <path d="M6 109h5v89H6zM170 852h59v5H170z" fill="#7592a6"/><path d="M3.500 201.500h9V830h-9zM33.500 850.500h133v9h-133z" fill="#8aa2b3" stroke="#dfe7ec" stroke-width="1.200"/></svg>
        <div class="side"><div class="strip"><svg width="6" height="9"><path d="M5 .5 1.500 4.500 5 8.500" fill="none" stroke="#77797c" stroke-width="1.400"/></svg></div><product-tree></product-tree></div>
        <stairwell-dialog class="dlg"></stairwell-dialog>
        <div class="tip"><div class="sq"><i></i></div><div class="pill">Position  &gt;&gt;</div></div>
        <action-bar class="actions"></action-bar>
      </div>`;
  }
}
